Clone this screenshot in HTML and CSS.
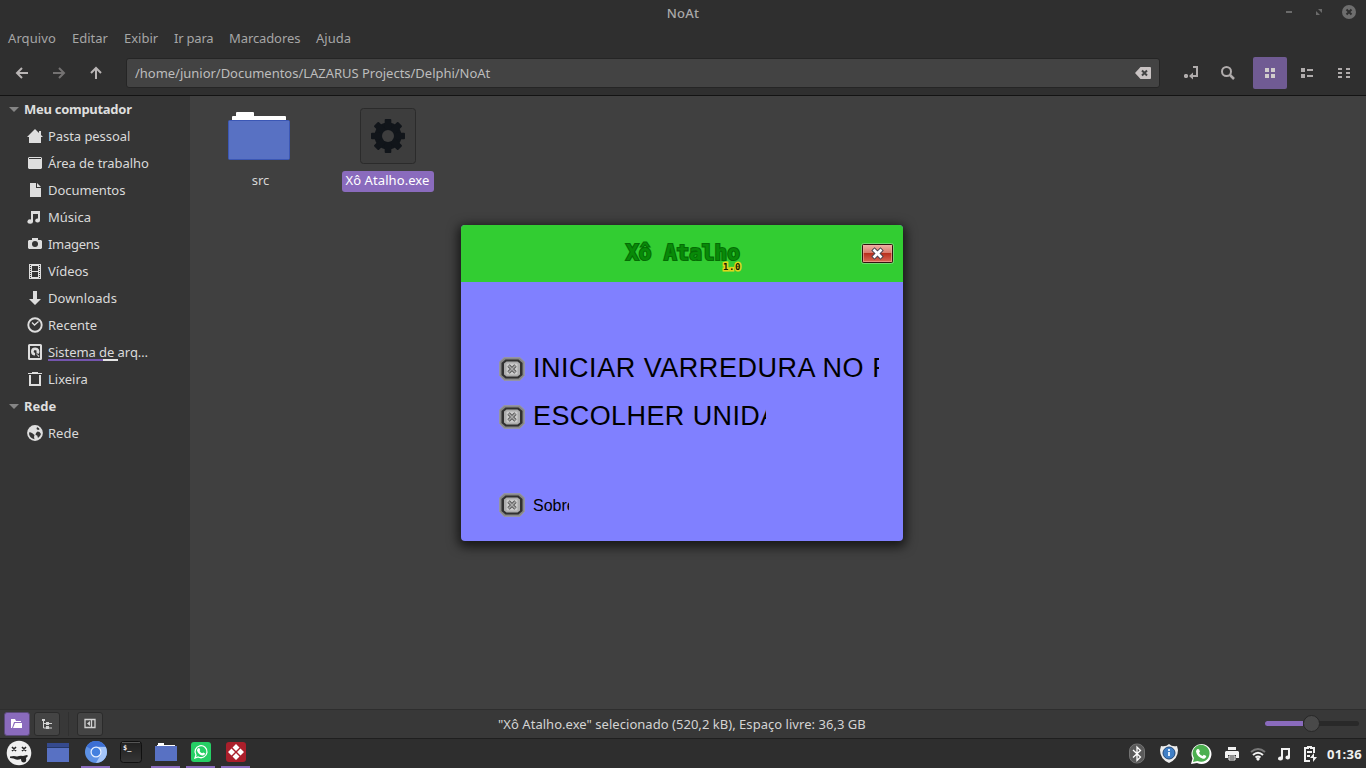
FILE: index.html
```html
<!DOCTYPE html>
<html lang="pt-BR">
<head>
<meta charset="utf-8">
<title>NoAt</title>
<link rel="stylesheet" href="styles.css">
</head>
<body>
<div class="desktop">
  <header class="titlebar">
    <span class="title">NoAt</span>
    <svg class="win-controls" width="86" height="26" viewBox="0 0 86 26"><path d="M6 11h6v2H6z" fill="#6b6b6b"/><path d="M38 9h4v4zM36 11v4h4z" fill="#6b6b6b"/><circle cx="69" cy="12" r="7" fill="#6e6e6e"/><path d="M66.500 9.500l5 5m0-5l-5 5" stroke="#2f2f2f" stroke-width="2"/></svg>
  </header>
  <nav class="menubar">
    <span class="m1">Arquivo</span><span class="m2">Editar</span><span class="m3">Exibir</span><span class="m4">Ir para</span><span class="m5">Marcadores</span><span class="m6">Ajuda</span>
  </nav>
  <div class="toolbar">
    <div class="nav-buttons">
      <svg width="16" height="16" viewBox="0 0 16 16"><path d="M14 8H4M8 3L3 8l5 5" class="arrow"/></svg>
      <svg class="dim" width="16" height="16" viewBox="0 0 16 16"><path d="M2 8h10M8 3l5 5-5 5" class="arrow"/></svg>
      <svg width="16" height="16" viewBox="0 0 16 16"><path d="M8 14V4M3 8l5-5 5 5" class="arrow"/></svg>
    </div>
    <div class="pathbar"><span class="path">/home/junior/Documentos/LAZARUS Projects/Delphi/NoAt</span>
      <svg width="16" height="12" viewBox="0 0 16 12"><path d="M0 6l5.500-6H15q1 0 1 1v10q0 1-1 1H5.500z" fill="#c9c3c3"/><path d="M7 3.500l5 5m0-5l-5 5" stroke="#434343" stroke-width="2"/></svg>
    </div>
    <svg class="tool-enter" width="16" height="16" viewBox="0 0 16 16"><path d="M9 2h4v9H8" fill="none" stroke="#b0acac" stroke-width="2"/><path d="M5 11l4-3.500v7zM1 9h2l1 1v2l-1 1H1l-1-1v-2z" fill="#b0acac"/></svg>
    <svg class="tool-search" width="16" height="16" viewBox="0 0 16 16"><circle cx="6.500" cy="6.500" r="4.500" fill="none" stroke="#b0acac" stroke-width="2"/><path d="M10 10l4 4" stroke="#b0acac" stroke-width="2.500"/></svg>
    <div class="view-grid"><svg width="10" height="10" viewBox="0 0 10 10"><path d="M0 0h4v4H0zM6 0h4v4H6zM0 6h4v4H0zM6 6h4v4H6z" fill="#d0cccc"/></svg></div>
    <svg class="view-list" width="12" height="10" viewBox="0 0 12 10"><path d="M0 0h4v4H0zM6 1h6v2H6zM0 6h4v4H0zM6 7h6v2H6z" fill="#b0acac"/></svg>
    <svg class="view-compact" width="12" height="10" viewBox="0 0 12 10"><path d="M0 0h4v2H0zM8 0h4v2H8zM0 4h4v2H0zM8 4h4v2H8zM0 8h4v2H0zM8 8h4v2H8z" fill="#b0acac"/></svg>
  </div>

  <main class="content">
    <aside class="sidebar">
      <div class="heading"><i class="expander"></i><span class="h1">Meu computador</span></div>
      <div class="place"><svg viewBox="0 0 16 16"><path d="M8 1L0 9h2v6h12V9h2l-2-2V3h-2v2z"/></svg><span class="p1">Pasta pessoal</span></div>
      <div class="place"><svg viewBox="0 0 16 16"><path d="M2 2h12l1 1v10l-1 1H2l-1-1V3z"/><path d="M2 3.500h12" stroke="#353535"/></svg><span class="p2">Área de trabalho</span></div>
      <div class="place"><svg viewBox="0 0 16 16"><path d="M3 1h6v5h5v9H3zM10 1l4 4h-4z"/></svg><span class="p3">Documentos</span></div>
      <div class="place"><svg viewBox="0 0 16 16"><path d="M4 2h9v9.500a2.400 2 0 1 1-2-2V5H6v7.500a2.800 2.200 0 1 1-2-2z"/></svg><span class="p4">Música</span></div>
      <div class="place"><svg viewBox="0 0 16 16"><path d="M5 2h6v2h3l1 1v7l-1 1H2l-1-1V5l1-1h3z"/><circle cx="8" cy="8" r="3" fill="#353535"/></svg><span class="p5">Imagens</span></div>
      <div class="place"><svg viewBox="0 0 16 16"><path d="M2 1h12v15H2z"/><path d="M5 3h6v5H5zM5 9h6v5H5z" fill="#353535"/><path d="M3.500 2v14M12.500 2v14" stroke="#353535" stroke-dasharray="1 1"/></svg><span class="p6">Vídeos</span></div>
      <div class="place"><svg viewBox="0 0 16 16"><path d="M6 1h4v8h4l-6 6-6-6h4z"/></svg><span class="p7">Downloads</span></div>
      <div class="place"><svg viewBox="0 0 16 16"><circle cx="8" cy="8" r="6.700" fill="none" stroke="#dedede" stroke-width="1.900"/><path d="M5 5.500L7.500 8l4-3.500" fill="none" stroke="#dedede" stroke-width="1.300"/></svg><span class="p8">Recente</span></div>
      <div class="place"><svg viewBox="0 0 16 16"><rect x="2" y="1" width="12" height="14" rx=".5" fill="none" stroke="#dedede" stroke-width="2"/><path d="M8 3.500a4 4 0 1 0 0 8V9l-1.500-1 1-2 2 .5V9l2 1a4 4 0 0 0-3.500-6.500zM8.500 9l4 3-1 1z"/></svg><span class="p9 disk">Sistema de arq…</span></div>
      <div class="place"><svg viewBox="0 0 16 16"><path d="M5 1h6v1h4v1H1V2h4z"/><path d="M3 4v10h10V4" fill="none" stroke="#dedede" stroke-width="2"/></svg><span class="p10">Lixeira</span></div>
      <div class="heading"><i class="expander"></i><span class="h2">Rede</span></div>
      <div class="place"><svg viewBox="0 0 16 16"><circle cx="8" cy="8" r="7.900"/><path d="M2.500 7l2.500 1 2.500 2-.5 2 .5 2.200Q3 13.500 2 9zM10 2l2 1.200.5 1.300-1.500.5-1.500-1zM9 8l1.500-1.500 2 .5 1.500 2-1 2-2 2-.8-2.500-1.700-.5z" fill="#353535"/></svg><span class="p11">Rede</span></div>
    </aside>
    <section class="files">
      <div class="file">
        <svg width="64" height="56" viewBox="0 0 64 56"><path d="M5 5q0-1 1-1h16q1 0 1 1v3h31q1 0 1 1v8H1V9q0-1 1-1h3z" fill="#fff" transform="translate(4)"/><rect x="1.500" y="12.500" width="61" height="39" rx="1" fill="#5871c3" stroke="#3b57b5"/></svg>
        <span class="src">src</span>
      </div>
      <div class="file">
        <svg width="56" height="56" viewBox="0 0 56 56"><rect x=".5" y=".5" width="55" height="55" rx="3" fill="#3d3d3d" stroke="#2b2b2b"/><g transform="translate(28 28)"><g fill="#11151a"><circle r="13.500"/><g id="teeth"><rect x="-3.300" y="-17" width="6.600" height="34" rx="1"/><rect x="-17" y="-3.300" width="34" height="6.600" rx="1"/></g><use href="#teeth" transform="rotate(45)"/></g><circle r="6" fill="#3d3d3d"/></g></svg>
        <span class="selected">Xô Atalho.exe</span>
      </div>
    </section>
  </main>

  <footer class="statusbar">
    <div class="sb-btn active"><svg width="14" height="12" viewBox="0 0 14 12"><path d="M1 1h4l1 2h5v1H4L2 10H1zM5 5h7v5H3z" fill="#fff"/></svg></div>
    <div class="sb-btn tree"><svg width="12" height="12" viewBox="0 0 12 12"><path d="M2.500 1v9H11M3 5.500h8" fill="none" stroke="#d2d2d2"/><path d="M1 1h3v2H1zM5 4h3v3H5zM5 8h3v3H5z" fill="#d2d2d2"/></svg></div>
    <i class="sb-sep"></i>
    <div class="sb-btn"><svg width="12" height="12" viewBox="0 0 12 12"><path d="M1 1.500h10v8H1zM7.500 2v8" fill="none" stroke="#d2d2d2" stroke-width="1.300"/><path d="M6 3v5L3 5.500z" fill="#d2d2d2"/></svg></div>
    <span class="status-text">"Xô Atalho.exe" selecionado (520,2 kB), Espaço livre: 36,3 GB</span>
    <div class="slider"><i class="slider-fill"></i><i class="slider-knob"></i></div>
  </footer>

  <footer class="panel">
    <div class="launchers">
      <div class="app"><svg width="26" height="26" viewBox="0 0 26 26"><circle cx="13" cy="13" r="12.300" fill="#efefef"/><path d="M6 7l4 4m0-4l-4 4M16 7l4 4m0-4l-4 4" stroke="#252525" stroke-width="1.600"/><path d="M4 16.500q4-1 7 0 3-1 6-.5l4-1 1 1-2 2q1 4-2 4.500-3 0-3-3.500-3 1-5 .5-2-1.500-6-1.500z" fill="#252525"/></svg></div>
      <div class="app"><svg width="24" height="24" viewBox="0 0 24 24"><path d="M1 3h22v19H1z" fill="#5871c3"/><path d="M1 3h22v4H1z" fill="#354a8e"/><path d="M1 7.500h22" stroke="#243768"/></svg></div>
      <div class="app running"><svg width="24" height="24" viewBox="0 0 24 24"><circle cx="12" cy="12" r="11" fill="#5c91e5"/><path d="M12 12L2.500 6.500A11 11 0 0 1 21.500 6.500H12z" fill="#3d6fd4"/><path d="M12 7h9.800A11 11 0 0 1 12 23l4.500-8z" fill="#a4c5fa"/><circle cx="12" cy="12" r="5.500" fill="#e8f0ff"/><circle cx="12" cy="12" r="4.300" fill="#4480df"/></svg></div>
      <div class="app"><svg width="24" height="24" viewBox="0 0 24 24"><defs><linearGradient id="term" x2="0" y2="1"><stop stop-color="#202020"/><stop offset="1" stop-color="#353535"/></linearGradient></defs><rect x="1.500" y="1.500" width="21" height="21" rx="3" fill="url(#term)" stroke="#101010"/><path d="M3 2.500h18" stroke="#555"/><text x="4" y="10" class="prompt">$_</text></svg></div>
      <div class="app running"><svg width="24" height="24" viewBox="0 0 24 24"><path d="M4 5V3h6v2h11v5H3V5z" fill="#fff"/><rect x="1" y="6" width="22" height="15" fill="#5871c3"/></svg></div>
      <div class="app running"><svg width="24" height="24" viewBox="0 0 24 24"><rect x="2" y="2" width="20" height="20" rx="3" fill="#26cf65"/><path d="M6 18l1-3a6 6 0 1 1 2.200 2z" fill="none" stroke="#fff" stroke-width="1.300"/><path d="M9.500 8l1 .3.700 1.700-.6 1q1 1.700 2.600 2.300l1-.9 2 1q-.8 2.600-3.200 2-4-1.500-5-5 0-1.800 1.500-2.400z" fill="#fff"/></svg></div>
      <div class="app running"><svg width="24" height="24" viewBox="0 0 24 24"><rect x="2" y="2" width="20" height="20" rx="3" fill="#aa1f2b"/><path d="M12 4l3.500 3.500L12 11 8.500 7.500zM7.500 8.500L11 12l-3.500 3.500L4 12zM16.500 8.500L20 12l-3.500 3.500L13 12zM12 13l3.500 3.500L12 20l-3.500-3.500z" fill="#fff"/></svg></div>
    </div>
    <div class="tray">
      <svg class="t1" width="16" height="22" viewBox="0 0 16 22"><rect x=".5" y="1" width="15" height="19" rx="7" fill="#5a5a5a" stroke="#737373"/><path d="M4 7l7.500 7L8 17.500V4L11.500 7.500 4 14.500" fill="none" stroke="#fff" stroke-width="1.300"/></svg>
      <svg class="t2" width="20" height="22" viewBox="0 0 20 22"><path d="M2 3q5 1 8-2 3 3 8 2l1 4q0 9-9 13Q1 16 1 7z" fill="#ededed"/><circle cx="10" cy="10" r="6" fill="#3f7fc6" stroke="#244b7b"/><path d="M9 6h2v2H9zM9 9h2v4H9z" fill="#dcecff"/></svg>
      <svg class="t3" width="22" height="22" viewBox="0 0 22 22"><path d="M1 21l1.500-5.500A10 10 0 1 1 7 20z" fill="#fff"/><path d="M3 19l1-4a8.500 8.500 0 1 1 3.500 3z" fill="#4caf50"/><path d="M7.500 6l1.500.3 1 2.300-1 1.300q1 2 3.500 3l1.300-1.200 2.500 1.200q-.5 3-3.500 2.800Q7 14 6 8.500q.2-2 1.500-2.500z" fill="#fff"/></svg>
      <svg class="t4" width="16" height="16" viewBox="0 0 16 16"><path d="M4 1h8v3H4zM2 5h12l1 1v6h-3V9H4v3H1V6z" fill="#f1f1f1"/><path d="M5 10h6v4H5zM5.500 12h5" fill="none" stroke="#f1f1f1"/></svg>
      <svg class="t5" width="16" height="16" viewBox="0 0 16 16"><g fill="none" stroke-width="2"><path d="M1 6q7-6 14 0" stroke="#777"/><path d="M3 9q5-4.500 10 0M5.500 11.500q2.500-2 5 0" stroke="#f1f1f1"/></g><path d="M8 11l2 2-2 2-2-2z" fill="#f1f1f1"/></svg>
      <svg class="t6" width="16" height="16" viewBox="0 0 16 16"><path d="M5 2h9v9.500a2.300 2 0 1 1-2-2V4H7v8.500a2.500 2 0 1 1-2-2z" fill="#f1f1f1"/></svg>
      <svg class="t7" width="16" height="18" viewBox="0 0 16 18"><path d="M12 8V3H9V2H6v1H3v13h5" fill="none" stroke="#f1f1f1" stroke-width="2"/><path d="M5 6h5v2H5zM5 10h3v2H5zM12 8l-4 5h3v4l4-5h-3z" fill="#f1f1f1"/></svg>
      <span class="clock">01:36</span>
    </div>
  </footer>

  <div class="dialog">
    <div class="dialog-head">
      <span class="logo">Xô Atalho</span><span class="version">1.0</span>
      <div class="close"><svg width="33" height="21" viewBox="0 0 33 21"><defs><linearGradient id="red" x2="0" y2="1"><stop stop-color="#f0b4a8"/><stop offset=".47" stop-color="#d77969"/><stop offset=".5" stop-color="#b8301d"/><stop offset="1" stop-color="#dc6a58"/></linearGradient></defs><rect x=".5" y=".5" width="32" height="20" rx="2" fill="none" stroke="#75d875"/><rect x="1.500" y="1.500" width="30" height="18" rx="1" fill="url(#red)" stroke="#32130f"/><path d="M2.500 2.500h28v16h-28z" fill="none" stroke="#f0aaa0" opacity=".65"/><path d="M13.500 7.500l6 6m0-6l-6 6" stroke="#4d4550" stroke-width="4.600" stroke-linecap="square"/><path d="M13.500 7.500l6 6m0-6l-6 6" stroke="#fff" stroke-width="2.700" stroke-linecap="square"/></svg></div>
    </div>
    <div class="dialog-body">
      <div class="option o1"><svg width="26" height="24" viewBox="0 0 26 24"><use href="#xbutton"/></svg><span>INICIAR VARREDURA NO PC</span></div>
      <div class="option o2"><svg width="26" height="24" viewBox="0 0 26 24"><use href="#xbutton"/></svg><span>ESCOLHER UNIDADE</span></div>
      <div class="option o3"><svg width="26" height="24" viewBox="0 0 26 24"><g id="xbutton"><path d="M5 .7h16l4.300 4v14l-4.300 4.600H5L.7 18.700v-14z" fill="#858585" stroke="#999"/><path d="M6.500 2.500h13L23.500 6v12l-4 3.500h-13L2.500 18V6z" fill="#303030"/><path d="M7.500 4.500h11l2.500 2v11l-2.500 2h-11l-2.500-2v-11z" fill="#adadad"/><rect x="7.500" y="6.500" width="11" height="11" rx="1" fill="#ccc"/><path d="M9.500 8.500l7 7m0-7l-7 7" stroke="#555" stroke-width="3.200"/><path d="M9.500 8.500l7 7m0-7l-7 7" stroke="#aaa" stroke-width="1.500"/></g></svg><span>Sobre</span></div>
    </div>
  </div>
</div>
</body>
</html>
```
FILE: styles.css
```css
* { box-sizing: border-box; }
body { margin: 0; overflow: hidden; background: #404040; font: 13px/18px "Noto Sans", sans-serif; color: #d6d6d6; }
.desktop { position: relative; width: 1366px; height: 768px; display: flex; flex-direction: column; white-space: nowrap; }
svg { display: block; flex: none; }

.titlebar { height: 26px; background: #2f2f2f; color: #a9a9a9; display: grid; grid-template-columns: 86px 1fr 86px; align-items: center; }
.title { grid-column: 2; text-align: center; font-weight: 500; letter-spacing: .2px; }
.menubar { height: 25px; background: #2f2f2f; color: #a6a6a6; display: flex; align-items: center; padding: 0 0 2px 8px; }
.menubar span { flex: none; }
.m1 { width: 64px; letter-spacing: .1px; }
.m2 { width: 52px; }
.m3 { width: 50px; }
.m4 { width: 55px; letter-spacing: -.2px; }
.m5 { width: 87px; letter-spacing: -.1px; }
.m6 { width: 50px; }

.toolbar { height: 45px; background: #2f2f2f; border-bottom: 1px solid #131313; display: flex; align-items: center; }
.nav-buttons { display: flex; gap: 21px; padding-left: 14px; width: 126px; }
.arrow { fill: none; stroke: #b9b5b5; stroke-width: 2; }
.dim { opacity: .5; }
.pathbar { width: 1034px; height: 30px; border: 1px solid #252525; border-radius: 3px; background: #434343; display: flex; align-items: center; justify-content: space-between; padding: 0 8px; color: #bdbdbd; }
.path { letter-spacing: -.02px; }
.tool-enter { margin-left: 24px; }
.tool-search { margin-left: 20px; }
.view-grid { margin-left: 17px; width: 34px; height: 32px; border-radius: 2px; background: #705b93; display: grid; place-items: center; }
.view-list { margin-left: 14px; }
.view-compact { margin-left: 25px; }

.content { height: 613px; display: flex; }
.sidebar { width: 190px; background: #353535; }
.heading, .place { height: 27px; display: flex; align-items: center; }
.heading { padding-left: 9px; font-weight: 700; color: #dedede; }
.heading span, .place span { margin-top: -2px; }
.expander { border: 5px solid transparent; border-top: 5px solid #858585; border-bottom: 0; margin-right: 5px; }
.h1 { letter-spacing: -.28px; }
.place { padding-left: 27px; gap: 5px; color: #dadada; }
.place svg { width: 16px; height: 16px; fill: #dedede; margin-top: -1px; }
.p1, .p2, .p3, .p9 { letter-spacing: -.06px; }
.p5 { letter-spacing: -.3px; }
.p7 { letter-spacing: .1px; }
.disk { background: linear-gradient(90deg, #7455ad 55px, #e4e4e4 55px) 0 100% / 70px 2px no-repeat; }
.files { flex: 1; display: flex; padding: 12px 0 0 4px; background: #404040; }
.file { width: 129px; height: 84px; display: flex; flex-direction: column; align-items: center; gap: 7px; }
.selected { background: #8a6bbd; color: #fff; border-radius: 3px; width: 92px; height: 21px; line-height: 19px; text-align: center; letter-spacing: .08px; }
.src { line-height: 19px; padding-left: 4px; }

.statusbar { height: 30px; background: #383838; border-top: 1px solid #2e2e2e; border-bottom: 1px solid #1f1f1f; display: flex; align-items: center; padding-left: 4px; }
.sb-btn { width: 26px; height: 24px; border: 1px solid #2b2b2b; border-radius: 3px; background: #444; display: grid; place-items: center; flex: none; }
.active { background: #8a6bbd; border-color: #5b4a7a; }
.tree { margin-left: 4px; }
.sb-sep { width: 1px; height: 24px; margin: 0 8px; background: #303030; }
.status-text { width: 1162px; padding-left: 395px; color: #d4d4d4; flex: none; letter-spacing: .035px; }
.slider { display: flex; align-items: center; width: 94px; height: 5px; border-radius: 3px; background: #292929; margin-top: -2px; }
.slider-fill { width: 38px; height: 5px; border-radius: 3px 0 0 3px; background: #8a6bbd; }
.slider-knob { width: 17px; height: 17px; border: 1px solid #272727; border-radius: 50%; background: #494949; }

.panel { height: 29px; background: #2e2e2e; display: flex; justify-content: space-between; }
.launchers { display: flex; gap: 6px; padding-left: 4px; }
.app { width: 29px; height: 29px; display: flex; justify-content: center; padding-top: 1px; }
.app:first-child { margin-right: 4px; }
.app:nth-child(2) { margin-right: 3px; }
.running { border-bottom: 2px solid #8a6bbd; }
.prompt { font: bold 7px "DejaVu Sans Mono", monospace; fill: #eee; }
.tray { display: flex; align-items: center; width: 238px; }
.tray svg { margin-top: 0; }
.t1 { margin-left: 1px; }
.t2 { margin-left: 14px; }
.t3 { margin-left: 11px; }
.t4 { margin-left: 12px; }
.t5 { margin-left: 10px; }
.t6 { margin-left: 10px; }
.t7 { margin-left: 10px; }
.clock { margin-left: 9px; font-weight: 700; color: #f0f0f0; padding-top: 1px; letter-spacing: .3px; }

.dialog { position: absolute; left: 461px; top: 225px; width: 442px; height: 316px; border-radius: 4px; overflow: hidden; background: #8080ff; box-shadow: 0 3px 11px 3px rgba(0,0,0,.65); color: #000; }
.dialog-head { position: relative; height: 57px; background: #32cd32; display: flex; align-items: center; padding-bottom: 1px; }
.logo { margin-left: 165px; width: 235px; font: bold 21px/26px "DejaVu Sans Mono", monospace; color: #088a08; -webkit-text-stroke: 2.200px #056c05; paint-order: stroke fill; }
.version { position: absolute; left: 262px; top: 37px; font: bold 9px/10px "DejaVu Sans Mono", monospace; color: #151b00; -webkit-text-stroke: 3px #e0d51c; paint-order: stroke fill; letter-spacing: .6px; }
.dialog-body { padding: 75px 0 0 38px; }
.option { display: flex; align-items: center; gap: 8px; height: 24px; font-family: "Liberation Sans", Arial, sans-serif; }
.option svg { margin-top: -1px; }
.option span { overflow: hidden; }
.o1 { width: 380px; font-size: 27px; letter-spacing: .53px; margin-bottom: 24px; }
.o2 { width: 267px; font-size: 27px; letter-spacing: .4px; margin-bottom: 64px; }
.o3 { width: 70px; font-size: 16px; letter-spacing: 0; }
.o1 span, .o2 span { line-height: 32px; margin-top: -3px; }
.o3 span { margin-top: 2px; width: 36px; }
```
